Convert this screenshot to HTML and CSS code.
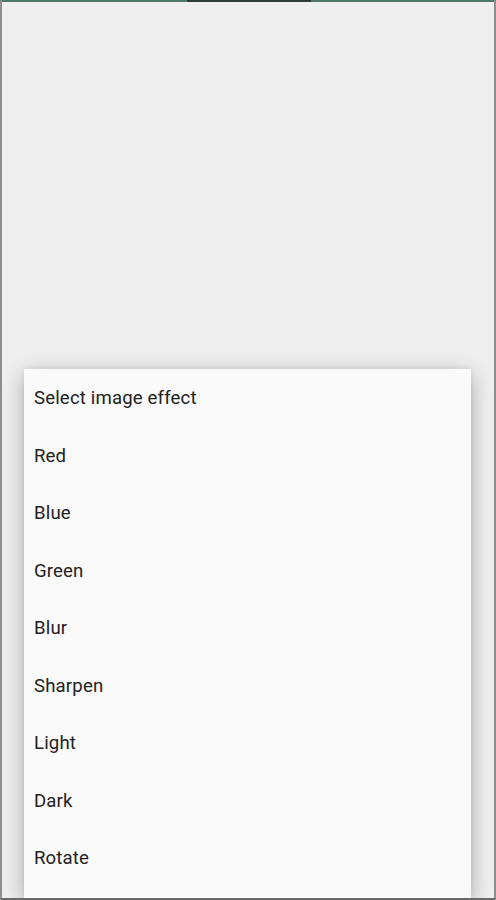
FILE: index.html
```html
<!DOCTYPE html>
<html>
<head>
<meta charset="utf-8">
<link rel="stylesheet" href="styles.css">
</head>
<body>
<div class="screen">
  <div class="topbar"><span class="seg"></span></div>
  <div class="backdrop"></div>
  <div class="menu">
    <div class="item title">Select image effect</div>
    <div class="item">Red</div>
    <div class="item">Blue</div>
    <div class="item">Green</div>
    <div class="item">Blur</div>
    <div class="item">Sharpen</div>
    <div class="item">Light</div>
    <div class="item">Dark</div>
    <div class="item">Rotate</div>
  </div>
</div>
</body>
</html>
```
FILE: styles.css
```css
html, body {
  margin: 0;
  padding: 0;
  background: #efefef;
}
.screen {
  width: 496px;
  height: 900px;
  box-sizing: border-box;
  border-left: 2px solid #8e8e8e;
  border-right: 2px solid #8e8e8e;
  border-bottom: 2px solid #6a6a6a;
  background: #efefef;
  display: flex;
  flex-direction: column;
  overflow: hidden;
  font-family: Roboto, "Noto Sans", sans-serif;
}
.topbar {
  height: 2px;
  flex: 0 0 2px;
  background: #4d7a66;
  display: flex;
  justify-content: flex-start;
}
.seg {
  margin-left: 185px;
  width: 124px;
  background: #2f3b36;
}
.backdrop {
  flex: 0 0 367px;
}
.menu {
  flex: 1;
  margin: 0 23px 0 22px;
  background: #fafafa;
  box-shadow: 0 6px 22px rgba(0, 0, 0, 0.28), 0 0 6px rgba(0, 0, 0, 0.08);
  display: flex;
  flex-direction: column;
  overflow: hidden;
}
.item {
  flex: 0 0 57.5px;
  display: flex;
  align-items: center;
  padding-left: 10px;
  padding-top: 1px;
  box-sizing: border-box;
  font-size: 18.6px;
  letter-spacing: 0.15px;
  color: #222222;
}
```
